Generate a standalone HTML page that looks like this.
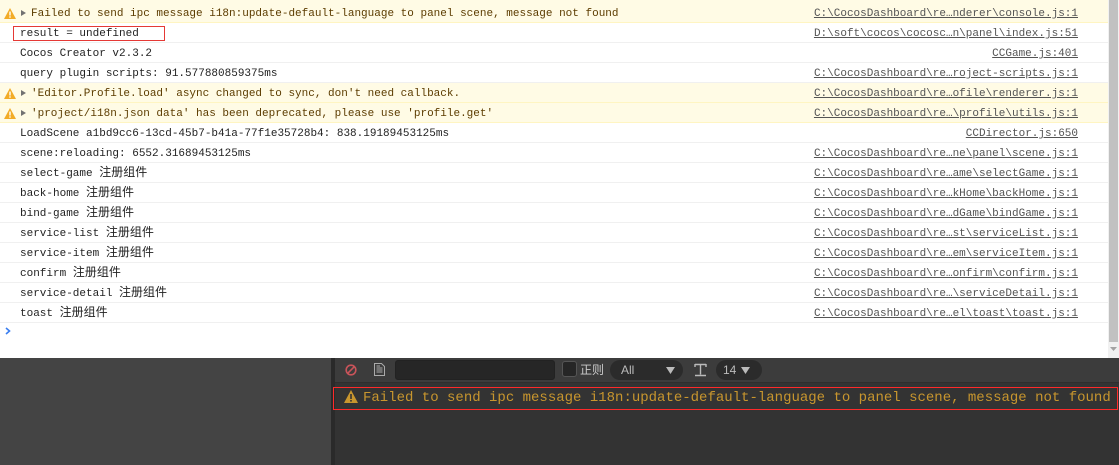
<!DOCTYPE html>
<html><head><meta charset="utf-8"><style>
*{margin:0;padding:0;box-sizing:border-box}
body{width:1119px;height:465px;overflow:hidden;background:#444;position:relative;font-family:"Liberation Mono","Noto Sans CJK SC",monospace}
#top{position:absolute;left:0;top:0;width:1108px;height:358px;background:#fff}
#sb{position:absolute;left:1108px;top:0;width:11px;height:358px;background:#f1f1f1}
#thumb{position:absolute;left:1px;top:0;width:9px;height:342px;background:#c1c1c1}
.row{position:absolute;left:0;width:1108px;height:20px;border-bottom:1px solid #f0f0f0;font-size:11px;color:#222;white-space:nowrap}
.row .t{position:absolute;left:20px;top:1px;height:20px;line-height:20px}
.row .l{position:absolute;right:30px;top:1px;line-height:20px;color:#545454;text-decoration:underline}
.w{background:#fffbe5;border-bottom-color:#fff5c2;color:#5c3c00}
.w .t{left:31px}
.ic{position:absolute;left:4px;top:5px}
.ar{position:absolute;left:21px;top:7px;width:0;height:0;border-left:5px solid #727272;border-top:3.5px solid transparent;border-bottom:3.5px solid transparent}
.zh{font-family:"Liberation Sans","Noto Sans CJK SC",sans-serif;font-size:12px;line-height:1}
#right{position:absolute;left:335px;top:358px;width:784px;height:107px;background:#333}
#div{position:absolute;left:331px;top:358px;width:4px;height:107px;background:#2a2a2a}
#tb{position:absolute;left:335px;top:358px;width:784px;height:25px;background:#3c3c3c;border-bottom:1px solid #2e2e2e}
</style></head><body>
<div id="top">
<div style="position:absolute;left:0;top:0;width:1108px;height:3px;background:#fffbe5"></div>
<div class="row w" style="top:3px"><svg class="ic" width="12" height="11" viewBox="0 0 12 11"><path d="M6 0L12 11H0Z" fill="#f2ab26"/><rect x="5.3" y="3.5" width="1.4" height="4" fill="#fff"/><rect x="5.3" y="8.3" width="1.4" height="1.4" fill="#fff"/></svg><span class="ar"></span><span class="t">Failed to send ipc message i18n:update-default-language to panel scene, message not found</span><span class="l">C:\CocosDashboard\re…nderer\console.js:1</span></div>
<div class="row" style="top:23px"><span style="left:13px;top:3px;height:15px;width:152px;border:1px solid #e53935;position:absolute"></span><span class="t">result = undefined</span><span class="l">D:\soft\cocos\cocosc…n\panel\index.js:51</span></div>
<div class="row" style="top:43px"><span class="t">Cocos Creator v2.3.2</span><span class="l">CCGame.js:401</span></div>
<div class="row" style="top:63px"><span class="t">query plugin scripts: 91.577880859375ms</span><span class="l">C:\CocosDashboard\re…roject-scripts.js:1</span></div>
<div class="row w" style="top:83px"><svg class="ic" width="12" height="11" viewBox="0 0 12 11"><path d="M6 0L12 11H0Z" fill="#f2ab26"/><rect x="5.3" y="3.5" width="1.4" height="4" fill="#fff"/><rect x="5.3" y="8.3" width="1.4" height="1.4" fill="#fff"/></svg><span class="ar"></span><span class="t">'Editor.Profile.load' async changed to sync, don't need callback.</span><span class="l">C:\CocosDashboard\re…ofile\renderer.js:1</span></div>
<div class="row w" style="top:103px"><svg class="ic" width="12" height="11" viewBox="0 0 12 11"><path d="M6 0L12 11H0Z" fill="#f2ab26"/><rect x="5.3" y="3.5" width="1.4" height="4" fill="#fff"/><rect x="5.3" y="8.3" width="1.4" height="1.4" fill="#fff"/></svg><span class="ar"></span><span class="t">'project/i18n.json data' has been deprecated, please use 'profile.get'</span><span class="l">C:\CocosDashboard\re…\profile\utils.js:1</span></div>
<div class="row" style="top:123px"><span class="t">LoadScene a1bd9cc6-13cd-45b7-b41a-77f1e35728b4: 838.19189453125ms</span><span class="l">CCDirector.js:650</span></div>
<div class="row" style="top:143px"><span class="t">scene:reloading: 6552.31689453125ms</span><span class="l">C:\CocosDashboard\re…ne\panel\scene.js:1</span></div>
<div class="row" style="top:163px"><span class="t">select-game <span class="zh">注册组件</span></span><span class="l">C:\CocosDashboard\re…ame\selectGame.js:1</span></div>
<div class="row" style="top:183px"><span class="t">back-home <span class="zh">注册组件</span></span><span class="l">C:\CocosDashboard\re…kHome\backHome.js:1</span></div>
<div class="row" style="top:203px"><span class="t">bind-game <span class="zh">注册组件</span></span><span class="l">C:\CocosDashboard\re…dGame\bindGame.js:1</span></div>
<div class="row" style="top:223px"><span class="t">service-list <span class="zh">注册组件</span></span><span class="l">C:\CocosDashboard\re…st\serviceList.js:1</span></div>
<div class="row" style="top:243px"><span class="t">service-item <span class="zh">注册组件</span></span><span class="l">C:\CocosDashboard\re…em\serviceItem.js:1</span></div>
<div class="row" style="top:263px"><span class="t">confirm <span class="zh">注册组件</span></span><span class="l">C:\CocosDashboard\re…onfirm\confirm.js:1</span></div>
<div class="row" style="top:283px"><span class="t">service-detail <span class="zh">注册组件</span></span><span class="l">C:\CocosDashboard\re…\serviceDetail.js:1</span></div>
<div class="row" style="top:303px"><span class="t">toast <span class="zh">注册组件</span></span><span class="l">C:\CocosDashboard\re…el\toast\toast.js:1</span></div>
<svg style="position:absolute;left:5px;top:327px" width="6" height="8" viewBox="0 0 6 8"><path d="M1 1L4.5 4L1 7" stroke="#3a7ef0" stroke-width="1.6" fill="none"/></svg>
</div>
<div id="sb"><div id="thumb"></div><svg style="position:absolute;left:2px;top:347px" width="7" height="5"><path d="M0 0H7L3.5 4Z" fill="#a3a3a3"/></svg></div>
<div id="div"></div>
<div id="right"></div>
<div id="tb">
<svg style="position:absolute;left:10px;top:6px" width="12" height="12" viewBox="0 0 12 12"><circle cx="6" cy="6" r="4.8" stroke="#c9545a" stroke-width="1.6" fill="none"/><path d="M2.7 9.3L9.3 2.7" stroke="#c9545a" stroke-width="1.6"/></svg>
<svg style="position:absolute;left:39px;top:5px" width="11" height="13" viewBox="0 0 11 13"><path d="M.5 .5H7.5L10.5 3.5V12.5H.5Z" fill="none" stroke="#aaa"/><path d="M2.5 5H8.5M2.5 7H8.5M2.5 9H8.5M2.5 3H6" stroke="#aaa"/></svg>
<div style="position:absolute;left:60px;top:2px;width:160px;height:20px;background:#262626;border-radius:3px;border:1px solid #222"></div>
<div style="position:absolute;left:227px;top:3px;width:15px;height:16px;background:#262626;border-radius:3px;border:1px solid #555"></div>
<span style="position:absolute;left:245px;top:3px;font:12px 'Liberation Sans','Noto Sans CJK SC',sans-serif;color:#ccc">正则</span>
<div style="position:absolute;left:275px;top:2px;width:73px;height:20px;background:#2b2b2b;border-radius:10px"><span style="position:absolute;left:11px;top:3px;font:12px 'Liberation Sans',sans-serif;color:#bbb">All</span><svg style="position:absolute;left:56px;top:7px" width="9" height="7"><path d="M0 0H9L4.5 7Z" fill="#bbb"/></svg></div>
<svg style="position:absolute;left:359px;top:5px" width="13" height="14" viewBox="0 0 13 14"><path d="M1 1.5H12M6.5 1.5V11.5M1 12.5H12M1 1V4M12 1V4" stroke="#bbb" stroke-width="1.4" fill="none"/></svg>
<div style="position:absolute;left:381px;top:2px;width:46px;height:20px;background:#2b2b2b;border-radius:10px"><span style="position:absolute;left:7px;top:3px;font:12px 'Liberation Sans',sans-serif;color:#bbb">14</span><svg style="position:absolute;left:25px;top:7px" width="9" height="7"><path d="M0 0H9L4.5 7Z" fill="#bbb"/></svg></div>
</div>
<div style="position:absolute;left:333px;top:387px;width:785px;height:23px;border:1px solid #ff2a2a"></div>
<svg style="position:absolute;left:344px;top:390px" width="14" height="13" viewBox="0 0 14 13"><path d="M7 0L14 13H0Z" fill="#c8962e"/><rect x="6.2" y="4" width="1.6" height="5" fill="#333"/><rect x="6.2" y="10" width="1.6" height="1.6" fill="#333"/></svg>
<span style="position:absolute;left:363px;top:390px;font:14px 'Liberation Mono',monospace;color:#c8962e;white-space:nowrap">Failed to send ipc message i18n:update-default-language to panel scene, message not found</span>
</body></html>
